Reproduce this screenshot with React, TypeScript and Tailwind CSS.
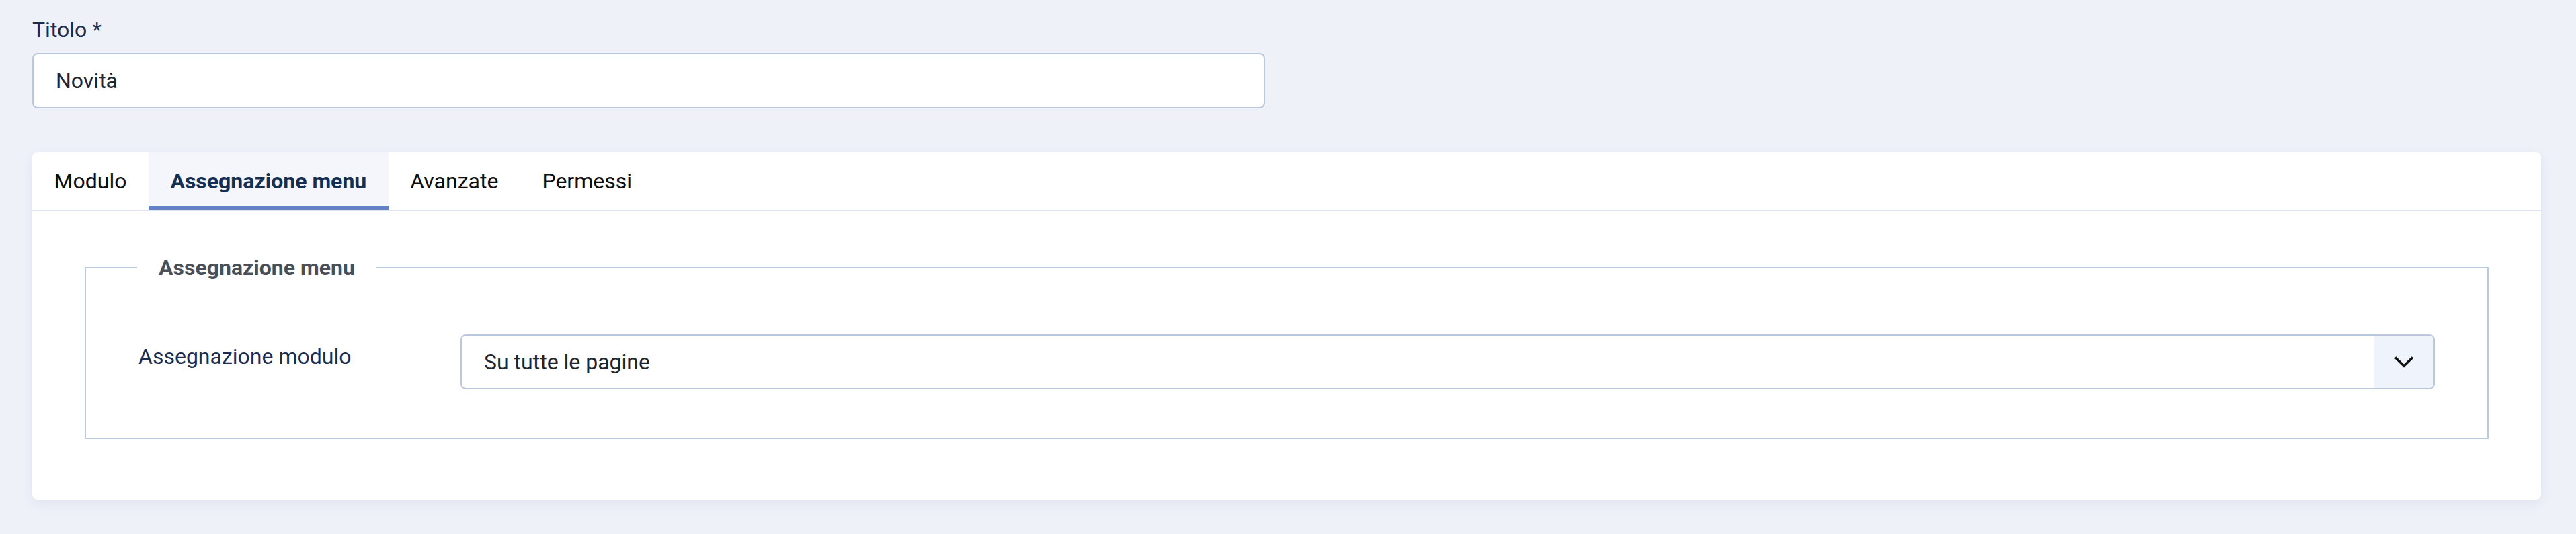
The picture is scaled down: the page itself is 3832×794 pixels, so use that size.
import React from "react";

function Chevron() {
  return (
    <svg width="30" height="18" viewBox="0 0 30 18" fill="none">
      <path d="M2 2.5 L15 15 L28 2.5" stroke="#111" strokeWidth="3.6" strokeLinejoin="miter" />
    </svg>
  );
}

const tabs = [
  { label: "Modulo", active: false },
  { label: "Assegnazione menu", active: true },
  { label: "Avanzate", active: false },
  { label: "Permessi", active: false },
];

export default function App() {
  return (
    <div
      className="min-h-screen w-full bg-[#eef1f8] pl-[48px] pr-[52px] pt-[20px] pb-[51px]"
      style={{ fontFamily: "Roboto, 'Noto Sans', 'Liberation Sans', sans-serif" }}
    >
      <label className="block text-[32px] leading-[48px] text-[#1c2c4f]">Titolo *</label>
      <div className="mt-[11px] flex h-[82px] w-[1834px] items-center rounded-[8px] border-2 border-[#bac7dd] bg-white pl-[33px] text-[32px] leading-[48px] text-[#22262a]">
        Novità
      </div>

      <div className="mt-[65px] rounded-[8px] bg-white shadow-[0_6px_18px_rgba(40,60,110,0.07)]">
        <div className="flex border-b-2 border-[#dfe4f0]">
          {tabs.map((t) => (
            <div
              key={t.label}
              className={
                t.active
                  ? "border-b-[6px] border-[#5f83c4] bg-[#f4f6fb] px-[32.5px] pt-[19px] pb-[13px] text-[32px] font-bold leading-[48px] text-[#132f53]"
                  : "border-b-[6px] border-transparent px-[32.5px] pt-[19px] pb-[13px] text-[32px] leading-[48px] text-[#0d0d0d]"
              }
            >
              {t.label}
            </div>
          ))}
        </div>

        <div className="px-[78px] pt-[60px] pb-[90px]">
          <fieldset className="border-2 border-[#bccadf]">
            <legend className="ml-[76px] px-[32px] text-[32px] font-bold leading-[48px] text-[#4a4f57]">
              Assegnazione menu
            </legend>
            <div className="flex px-[78px] pt-[75px] pb-[72px]">
              <div className="w-[479px] shrink-0 pt-[9px] text-[32px] leading-[48px] text-[#1d2d50]">
                Assegnazione modulo
              </div>
              <div className="flex h-[82px] flex-1 overflow-hidden rounded-[8px] border-2 border-[#bac7dd] bg-white">
                <div className="flex flex-1 items-center pl-[33px] text-[32px] leading-[48px] text-[#22262a]">
                  Su tutte le pagine
                </div>
                <div className="flex w-[88px] items-center justify-center bg-[#eff3fb]">
                  <Chevron />
                </div>
              </div>
            </div>
          </fieldset>
        </div>
      </div>
    </div>
  );
}
